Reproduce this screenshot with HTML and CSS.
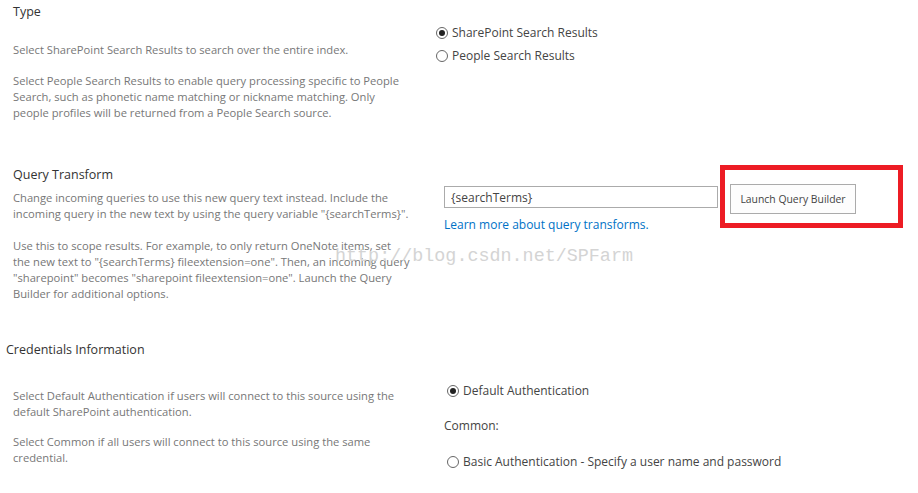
FILE: index.html
```html
<!DOCTYPE html>
<html>
  <head>
    <meta name="viewport" content="width=device-width, initial-scale=1.0">
    <title>Result Source Settings</title>
    <link rel="stylesheet" href="styles.css">
  </head>
  <body>
    <div id="settings">
      <div class="section section-type">
        <div class="section-left">
          <h3 class="section-title">Type</h3>
          <p class="desc desc-first">Select SharePoint Search Results to search over the entire index.</p>
          <p class="desc">Select People Search Results to enable query processing specific to People<br>
            Search, such as phonetic name matching or nickname matching. Only<br>
            people profiles will be returned from a People Search source.</p>
        </div>
        <div class="section-right">
          <label class="radio-row">
            <input type="radio" name="source-type" checked />
            <span>SharePoint Search Results</span>
          </label>
          <label class="radio-row">
            <input type="radio" name="source-type" />
            <span>People Search Results</span>
          </label>
        </div>
      </div>

      <div class="section section-query">
        <div class="section-left">
          <h3 class="section-title">Query Transform</h3>
          <p class="desc desc-first">Change incoming queries to use this new query text instead. Include the<br>
            incoming query in the new text by using the query variable "{searchTerms}".</p>
          <p class="desc">Use this to scope results. For example, to only return OneNote items, set<br>
            the new text to "{searchTerms} fileextension=one". Then, an incoming query<br>
            "sharepoint" becomes "sharepoint fileextension=one". Launch the Query<br>
            Builder for additional options.</p>
        </div>
        <div class="section-right">
          <div class="query-row">
            <div class="query-field">
              <input type="text" id="query-text" value="{searchTerms}" />
              <a href="#" id="learn-link">Learn more about query transforms.</a>
            </div>
            <div id="builder-box">
              <button type="button" id="builder-btn">Launch Query Builder</button>
            </div>
          </div>
        </div>
      </div>

      <div class="section section-creds">
        <div class="section-left">
          <h3 class="section-title title-outdent">Credentials Information</h3>
          <p class="desc desc-first">Select Default Authentication if users will connect to this source using the<br>
            default SharePoint authentication.</p>
          <p class="desc">Select Common if all users will connect to this source using the same<br>
            credential.</p>
        </div>
        <div class="section-right">
          <label class="radio-row">
            <input type="radio" name="auth" checked />
            <span>Default Authentication</span>
          </label>
          <div id="common-label">Common:</div>
          <label class="radio-row">
            <input type="radio" name="auth" />
            <span>Basic Authentication - Specify a user name and password</span>
          </label>
        </div>
      </div>
    </div>
    <div id="watermark">http://blog.csdn.net/SPFarm</div>
  </body>
</html>
```

FILE: styles.css
```css
body {
  margin: 0;
  font-family: "Open Sans", "Noto Sans", sans-serif;
  background-color: #ffffff;
  color: #444444;
  width: 918px;
  height: 493px;
  overflow: hidden;
  position: relative;
}

.section {
  display: grid;
  grid-template-columns: 423px 1fr;
}

.section-left {
  padding-left: 13px;
}

.section-left .desc {
  white-space: nowrap;
}

.section-title {
  margin: 0;
  font-size: 12.5px;
  font-weight: normal;
  line-height: 16px;
  color: #333333;
}

.title-outdent {
  margin-left: -7px;
}

.desc {
  margin: 15px 0 0 0;
  font-size: 11.2px;
  line-height: 16px;
  color: #777777;
}

/* Type */
.section-type {
  padding-top: 4px;
}

.section-type .desc-first {
  margin-top: 22px;
}

.section-type .section-right {
  padding-top: 17px;
  padding-left: 13px;
}

.radio-row {
  display: flex;
  align-items: center;
  height: 23px;
  font-size: 12px;
  color: #444444;
}

.radio-row input {
  appearance: none;
  -webkit-appearance: none;
  width: 12px;
  height: 12px;
  margin: 0 4px 0 0;
  border: 1px solid #666666;
  border-radius: 50%;
  background-color: #ffffff;
  display: grid;
  place-content: center;
}

.radio-row input:checked::before {
  content: "";
  width: 6px;
  height: 6px;
  border-radius: 50%;
  background-color: #222222;
}

/* Query Transform */
.section-query {
  margin-top: 46px;
}

.section-query .desc {
  margin-top: 16px;
}

.section-query .desc-first {
  margin-top: 7px;
}

.section-query .section-right {
  margin-top: -2px;
}

.query-row {
  display: flex;
  align-items: flex-start;
  padding-left: 21px;
}

.query-field {
  padding-top: 21px;
  display: flex;
  flex-direction: column;
}

#query-text {
  width: 274px;
  height: 22px;
  box-sizing: border-box;
  border: 1px solid #ababab;
  padding: 0 6px;
  font-family: inherit;
  font-size: 12px;
  color: #444444;
  outline: none;
}

#learn-link {
  margin-top: 9px;
  font-size: 12px;
  line-height: 16px;
  color: #0072c6;
  text-decoration: none;
}

#builder-box {
  margin-left: 2px;
  width: 183px;
  height: 63px;
  box-sizing: border-box;
  border: 5px solid #ed1c24;
  padding: 14px 0 0 5px;
}

#builder-btn {
  width: 126px;
  height: 30px;
  border: 1px solid #ababab;
  background-color: #fdfdfd;
  font-family: inherit;
  font-size: 10.4px;
  color: #444444;
  padding: 0;
}

/* Credentials */
.section-creds {
  margin-top: 40px;
}

.section-creds .desc {
  margin-top: 14px;
}

.section-creds .desc-first {
  margin-top: 30px;
}

.section-creds .section-right {
  padding-top: 37px;
  padding-left: 24px;
}

#common-label {
  margin: 16px 0 16px -3px;
  font-size: 12px;
  line-height: 16px;
  color: #444444;
}

#watermark {
  position: absolute;
  left: 335px;
  top: 246px;
  font-family: "Liberation Mono", monospace;
  font-size: 18.4px;
  line-height: 22px;
  color: #d4d4d4;
  pointer-events: none;
}
```
